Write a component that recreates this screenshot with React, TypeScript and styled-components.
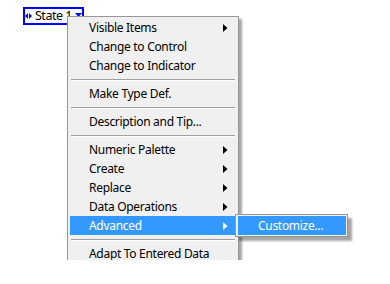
import React from "react";
import styled, { createGlobalStyle } from "styled-components";

const Global = createGlobalStyle`
  html, body { margin: 0; padding: 0; background: #ffffff; }
  body { font-family: "Noto Sans", "Open Sans", sans-serif; }
`;

const Page = styled.div`
  position: relative;
  width: 390px;
  height: 260px;
  overflow: hidden;
  padding: 7px 0 0 23px;
  box-sizing: border-box;
`;

const Control = styled.div`
  display: flex;
  align-items: center;
  width: 61px;
  height: 18px;
  box-sizing: border-box;
  border: 2px solid #0000ff;
  padding: 0 2px 0 0;
  gap: 3px;
  background: #ffffff;
`;

const Glyph = styled.svg`
  flex: none;
  display: block;
`;

const Label = styled.span`
  flex: none;
  font-size: 12.5px;
  color: #000;
  line-height: 14px;
  letter-spacing: -0.5px;
  white-space: nowrap;
`;

const DropArrow = styled(Glyph)`
  margin-left: auto;
  margin-bottom: 3px;
`;

const Menu = styled.div`
  position: absolute;
  left: 67px;
  top: 16px;
  width: 172px;
  box-sizing: border-box;
  background: #f0f0f0;
  border: 1px solid #979797;
  padding: 1px 3px 2px 2px;
  box-shadow: 3px 3px 2px rgba(0, 0, 0, 0.35);
`;

const Row = styled.div<{ $active?: boolean }>`
  position: relative;
  display: flex;
  align-items: center;
  height: 19px;
  padding: 0 7px 0 19px;
  font-size: 12px;
  letter-spacing: -0.3px;
  color: ${(p) => (p.$active ? "#ffffff" : "#000000")};
  background: ${(p) => (p.$active ? "#3399ff" : "transparent")};
  white-space: nowrap;
`;

const RowText = styled.span`
  flex: 1;
`;

const Separator = styled.div`
  height: 9px;
  display: flex;
  align-items: center;
  padding: 0 0 0 1px;
  &::after {
    content: "";
    display: block;
    flex: 1;
    height: 0;
    border-top: 1px solid #a0a0a0;
    border-bottom: 1px solid #ffffff;
  }
`;

const SubMenu = styled.div`
  position: absolute;
  left: 100%;
  top: -2px;
  width: 113px;
  box-sizing: border-box;
  background: #f0f0f0;
  border: 1px solid #979797;
  padding: 1px 1px 1px 2px;
  box-shadow: 4px 4px 2px rgba(0, 0, 0, 0.35);
`;

const SubRow = styled(Row)`
  padding-left: 20px;
`;

const Arrow = ({ color }: { color: string }) => (
  <Glyph width="5" height="8" viewBox="0 0 5 8">
    <polygon points="0,0 4.5,4 0,8" fill={color} />
  </Glyph>
);

type Item = { kind: "item"; label: string; sub?: boolean; active?: boolean } | { kind: "sep" };

const items: Item[] = [
  { kind: "item", label: "Visible Items", sub: true },
  { kind: "item", label: "Change to Control" },
  { kind: "item", label: "Change to Indicator" },
  { kind: "sep" },
  { kind: "item", label: "Make Type Def." },
  { kind: "sep" },
  { kind: "item", label: "Description and Tip..." },
  { kind: "sep" },
  { kind: "item", label: "Numeric Palette", sub: true },
  { kind: "item", label: "Create", sub: true },
  { kind: "item", label: "Replace", sub: true },
  { kind: "item", label: "Data Operations", sub: true },
  { kind: "item", label: "Advanced", sub: true, active: true },
  { kind: "sep" },
  { kind: "item", label: "Adapt To Entered Data" },
];

export default function App() {
  return (
    <>
      <Global />
      <Page>
        <Control>
          <Glyph width="7" height="6" viewBox="0 0 7 6">
            <polygon points="0,3 3,0 3,6" fill="#0000ff" />
            <polygon points="7,3 4,0 4,6" fill="#0000ff" />
          </Glyph>
          <Label>State 1</Label>
          <DropArrow width="7" height="4" viewBox="0 0 7 4">
            <polygon points="0,0 7,0 3.5,4" fill="#0000ff" />
          </DropArrow>
        </Control>
        <Menu>
          {items.map((it, i) =>
            it.kind === "sep" ? (
              <Separator key={i} />
            ) : (
              <Row key={i} $active={it.active}>
                <RowText>{it.label}</RowText>
                {it.sub && <Arrow color={it.active ? "#ffffff" : "#000000"} />}
                {it.active && (
                  <SubMenu>
                    <SubRow $active>
                      <RowText>Customize...</RowText>
                    </SubRow>
                  </SubMenu>
                )}
              </Row>
            )
          )}
        </Menu>
      </Page>
    </>
  );
}
